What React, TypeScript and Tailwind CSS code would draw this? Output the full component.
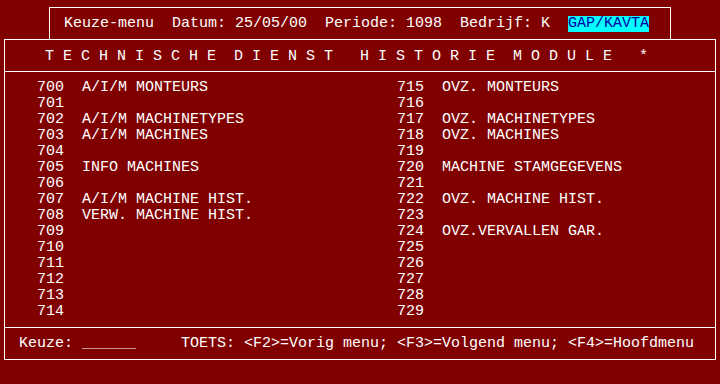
const rows: [string, string, string, string][] = [
  ['700', 'A/I/M MONTEURS', '715', 'OVZ. MONTEURS'],
  ['701', '', '716', ''],
  ['702', 'A/I/M MACHINETYPES', '717', 'OVZ. MACHINETYPES'],
  ['703', 'A/I/M MACHINES', '718', 'OVZ. MACHINES'],
  ['704', '', '719', ''],
  ['705', 'INFO MACHINES', '720', 'MACHINE STAMGEGEVENS'],
  ['706', '', '721', ''],
  ['707', 'A/I/M MACHINE HIST.', '722', 'OVZ. MACHINE HIST.'],
  ['708', 'VERW. MACHINE HIST.', '723', ''],
  ['709', '', '724', 'OVZ.VERVALLEN GAR.'],
  ['710', '', '725', ''],
  ['711', '', '726', ''],
  ['712', '', '727', ''],
  ['713', '', '728', ''],
  ['714', '', '729', ''],
];

export default function App() {
  return (
    <div className="w-[720px] h-[384px] bg-[#800000] text-white overflow-hidden pt-[7px] font-['Liberation_Mono',monospace] text-[15px] leading-[16px] whitespace-pre">
      {/* status box */}
      <div className="ml-[49px] w-[622px] h-[32px] border-t border-l border-r border-white pt-[8px] pl-[14px]">
        <span>Keuze-menu  Datum: 25/05/00  Periode: 1098  Bedrijf: K  </span>
        <span className="inline-block h-[16px] bg-[#00ffff] text-[#0000a8]">GAP/KAVTA</span>
      </div>

      {/* main screen */}
      <div className="ml-[4px] w-[712px] border border-white">
        <div className="h-[32px] border-b border-white pt-[9px] pl-[40px]">
          T E C H N I S C H E  D I E N S T   H I S T O R I E  M O D U L E   *
        </div>

        <div className="h-[256px] border-b border-white pt-[8px] pl-[32px]">
          {rows.map(([n1, t1, n2, t2]) => (
            <div key={n1} className="flex h-[16px]">
              <div className="w-[360px] flex">
                <span className="w-[45px]">{n1}</span>
                <span>{t1}</span>
              </div>
              <div className="flex">
                <span className="w-[45px]">{n2}</span>
                <span>{t2}</span>
              </div>
            </div>
          ))}
        </div>

        <div className="h-[31px] pt-[8px] pl-[14px]">
          Keuze: ______     TOETS: &lt;F2&gt;=Vorig menu; &lt;F3&gt;=Volgend menu; &lt;F4&gt;=Hoofdmenu
        </div>
      </div>
    </div>
  );
}
